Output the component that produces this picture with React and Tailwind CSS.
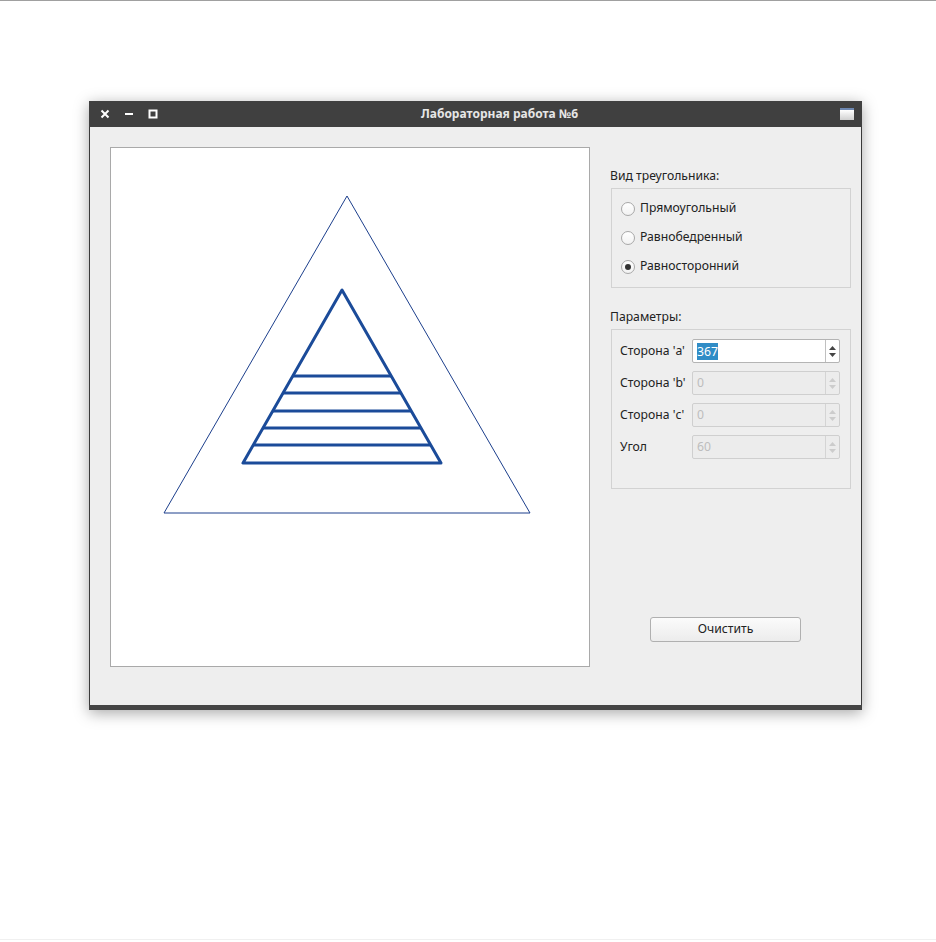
import React from 'react';

const font = { fontFamily: '"Noto Sans", "DejaVu Sans", sans-serif' };

const Radio = ({ label, checked }) => (
  <div className="flex items-center h-[29px]">
    <span className="w-[14px] h-[14px] rounded-full border border-[#a8a8a8] bg-gradient-to-b from-white to-[#f2f2f2] flex items-center justify-center mr-[5px]">
      {checked && <span className="w-[6px] h-[6px] rounded-full bg-[#333]"></span>}
    </span>
    <span className="text-[12.2px] text-[#222]">{label}</span>
  </div>
);

const Arrows = ({ disabled }) => (
  <div className={`w-[14px] h-full border-l ${disabled ? 'border-[#d4d4d4]' : 'border-[#c0c0c0]'} flex flex-col items-center justify-center gap-[3px]`}>
    <svg width="7" height="4" viewBox="0 0 7 4">
      <path d="M0 4 L3.5 0 L7 4 Z" fill={disabled ? '#cccccc' : '#444'} />
    </svg>
    <svg width="7" height="4" viewBox="0 0 7 4">
      <path d="M0 0 L3.5 4 L7 0 Z" fill={disabled ? '#cccccc' : '#444'} />
    </svg>
  </div>
);

const SpinRow = ({ label, value, disabled }) => (
  <div className="flex items-center h-[24px]">
    <span className="w-[72px] text-[12.2px] text-[#222]">{label}</span>
    <div className={`w-[148px] h-[24px] flex items-stretch rounded-[2px] border ${disabled ? 'border-[#cfcfcf] bg-[#ececec]' : 'border-[#b4b4b4] bg-white'}`}>
      <div className="flex-1 flex items-center pl-[4px] text-[12.2px]">
        {disabled ? (
          <span className="text-[#bdbdbd]">{value}</span>
        ) : (
          <span className="bg-[#308cc6] text-white leading-[17px]">{value}</span>
        )}
      </div>
      <Arrows disabled={disabled} />
    </div>
  </div>
);

const Canvas = () => {
  const hatch = [
    [228, 181.8, 280.2],
    [245, 172.1, 289.9],
    [263, 161.8, 300.2],
    [280, 152, 310],
    [297, 142.3, 319.7],
  ];
  return (
    <div className="w-[480px] h-[520px] border border-[#a9a9a9] bg-white shrink-0">
      <svg width="478" height="518" viewBox="0 0 478 518">
        <polygon points="236,48 53,365 419,365" fill="none" stroke="#1c3f8c" strokeWidth="1" />
        <polygon points="231,142 132,315 330,315" fill="none" stroke="#1b4b99" strokeWidth="3" strokeLinejoin="round" />
        {hatch.map(([y, x1, x2]) => (
          <line key={y} x1={x1} y1={y} x2={x2} y2={y} stroke="#1b4b99" strokeWidth="3" />
        ))}
      </svg>
    </div>
  );
};

const App = () => {
  return (
    <div className="h-[942px] bg-white border-t border-[#a0a0a0] relative" style={font}>
      <div className="pt-[100px] pl-[89px]">
        <div className="w-[773px] shadow-[0_3px_14px_rgba(0,0,0,0.35)]">
          {/* title bar */}
          <div className="h-[26px] bg-[#404040] flex items-center">
            <div className="w-[120px] flex items-center pl-[11px] gap-[14px]">
              <svg width="10" height="10" viewBox="0 0 10 10">
                <path d="M1.5 1.5 L8.5 8.5 M8.5 1.5 L1.5 8.5" stroke="#fff" strokeWidth="2" />
              </svg>
              <svg width="10" height="10" viewBox="0 0 10 10">
                <path d="M1 5 L9 5" stroke="#fff" strokeWidth="2" />
              </svg>
              <svg width="10" height="10" viewBox="0 0 10 10">
                <rect x="1.5" y="1.5" width="7" height="7" fill="none" stroke="#fff" strokeWidth="2" />
              </svg>
            </div>
            <div className="flex-1 text-center text-[12px] font-bold text-[#e6e6e6]">Лабораторная работа №6</div>
            <div className="w-[72px] flex justify-end pr-[8px]">
              <div className="w-[14px] h-[12px] border-t-2 border-[#6d87b0] bg-gradient-to-b from-white to-[#d0d0d0]"></div>
            </div>
          </div>
          {/* body */}
          <div className="h-[578px] bg-[#eeeeee] border-x border-[#3a3a3a] flex pl-[20px] pt-[20px]">
            <Canvas />
            <div className="ml-[20px] w-[241px] flex flex-col">
              <div className="mt-[20px] h-[18px] text-[12.2px] text-[#222] leading-[18px]">Вид треугольника:</div>
              <div className="mt-[3px] ml-[1px] w-[240px] h-[100px] border border-[#d2d2d2] pl-[9px] pt-[5px]">
                <Radio label="Прямоугольный" />
                <Radio label="Равнобедренный" />
                <Radio label="Равносторонний" checked />
              </div>
              <div className="mt-[20px] h-[18px] text-[12.2px] text-[#222] leading-[18px]">Параметры:</div>
              <div className="mt-[3px] ml-[1px] w-[240px] h-[160px] border border-[#d2d2d2] pl-[8px] pt-[9px] flex flex-col gap-[8px]">
                <SpinRow label="Сторона 'a'" value="367" />
                <SpinRow label="Сторона 'b'" value="0" disabled />
                <SpinRow label="Сторона 'c'" value="0" disabled />
                <SpinRow label="Угол" value="60" disabled />
              </div>
              <button className="mt-[128px] ml-[40px] w-[151px] h-[25px] rounded-[3px] border border-[#b0b0b0] bg-gradient-to-b from-[#fbfbfb] to-[#ececec] text-[12.2px] text-[#222]">
                Очистить
              </button>
            </div>
          </div>
          <div className="h-[5px] bg-[#444444]"></div>
        </div>
      </div>
      <div className="absolute left-0 right-0 top-[938px] h-px bg-[#f0f0f0]"></div>
    </div>
  );
};

export default App;
